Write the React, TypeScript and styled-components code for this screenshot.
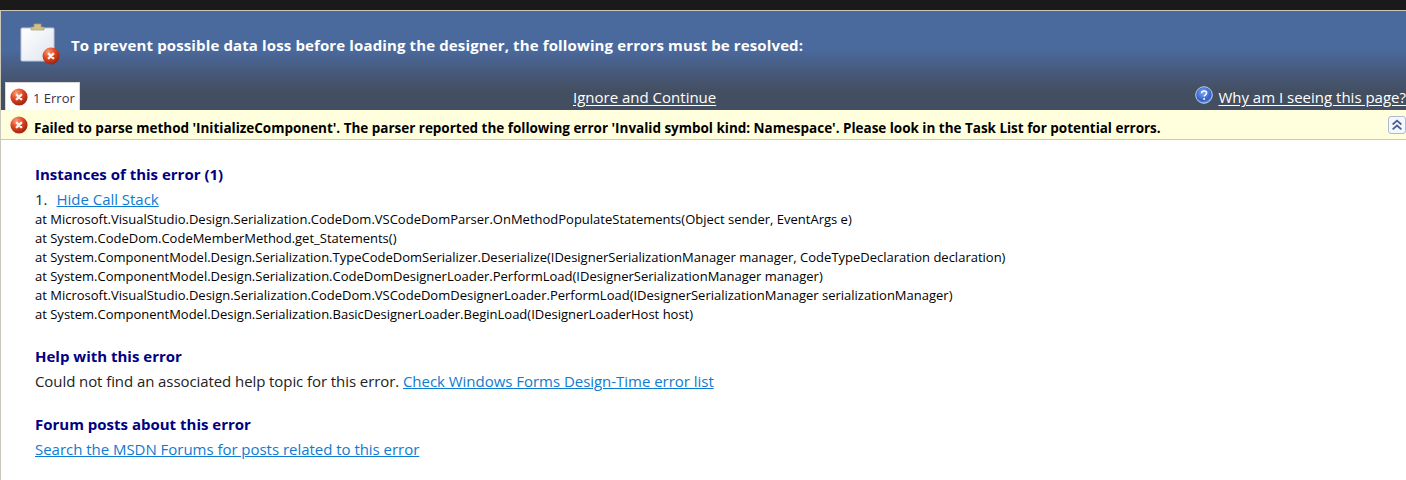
import styled, { createGlobalStyle } from "styled-components";

const stack = [
  "at Microsoft.VisualStudio.Design.Serialization.CodeDom.VSCodeDomParser.OnMethodPopulateStatements(Object sender, EventArgs e)",
  "at System.CodeDom.CodeMemberMethod.get_Statements()",
  "at System.ComponentModel.Design.Serialization.TypeCodeDomSerializer.Deserialize(IDesignerSerializationManager manager, CodeTypeDeclaration declaration)",
  "at System.ComponentModel.Design.Serialization.CodeDomDesignerLoader.PerformLoad(IDesignerSerializationManager manager)",
  "at Microsoft.VisualStudio.Design.Serialization.CodeDom.VSCodeDomDesignerLoader.PerformLoad(IDesignerSerializationManager serializationManager)",
  "at System.ComponentModel.Design.Serialization.BasicDesignerLoader.BeginLoad(IDesignerLoaderHost host)",
];

const GlobalStyle = createGlobalStyle`
  html, body {
    margin: 0;
    padding: 0;
    background: #fff;
    overflow: hidden;
  }
  body {
    font-family: "Open Sans", "Noto Sans", sans-serif;
  }
`;

const Page = styled.div`
  width: 1406px;
  height: 480px;
  display: flex;
  flex-direction: column;
  background: #fff;
  overflow: hidden;
`;

const TopBar = styled.div`
  flex: none;
  height: 10px;
  background: #1a1a1a;
`;

const Frame = styled.div`
  flex: 1;
  min-height: 0;
  display: flex;
  flex-direction: column;
  border-top: 1px solid #cfc8b8;
  border-left: 1px solid #cbc7bb;
`;

const Banner = styled.div`
  flex: none;
  height: 99px;
  display: flex;
  flex-direction: column;
  justify-content: space-between;
  background: linear-gradient(#4a6a9e 0%, #4a6a9e 38%, #47597a 62%, #434e60 82%, #434e60 100%);
`;

const Headline = styled.div`
  display: flex;
  align-items: center;
  gap: 9px;
  padding: 12px 0 0 19px;
`;

const HeadlineText = styled.h1`
  margin: 0;
  padding-top: 2px;
  color: #fff;
  font-size: 15px;
  line-height: 20px;
  font-weight: 700;
  letter-spacing: 0.13px;
  white-space: nowrap;
`;

const TabRow = styled.div`
  display: grid;
  grid-template-columns: 568px auto 1fr;
  align-items: end;
  padding-left: 4px;
`;

const Tab = styled.div`
  justify-self: start;
  width: 75px;
  height: 28px;
  display: flex;
  align-items: center;
  gap: 5px;
  padding-left: 4px;
  box-sizing: border-box;
  background: #fff;
  border: 1px solid #d8d8d8;
  border-bottom: 0;
  color: #3c2f4a;
  font-size: 13px;
`;

const TabLabel = styled.span`
  padding-top: 2px;
`;

const BannerLink = styled.a`
  color: #fff;
  font-size: 15px;
  line-height: 20px;
  text-decoration: underline;
  text-underline-offset: 2px;
  margin-bottom: 3px;
  white-space: nowrap;
`;

const HelpLink = styled.div`
  justify-self: end;
  display: flex;
  align-items: flex-start;
  gap: 5px;
`;

const Notice = styled.div`
  flex: none;
  height: 29px;
  display: flex;
  align-items: center;
  gap: 6px;
  padding: 0 0 0 9px;
  background: #ffffdd;
  border-bottom: 1px solid #cbc7bb;
`;

const NoticeText = styled.div`
  flex: 1;
  padding-top: 6px;
  color: #000;
  font-size: 13.5px;
  font-weight: 700;
  white-space: nowrap;
  letter-spacing: -0.02px;
`;

const Collapse = styled.div`
  width: 18px;
  height: 18px;
  box-sizing: border-box;
  border: 1px solid #a9bcd4;
  border-radius: 3px;
  background: #f4f7fb;
  display: flex;
  align-items: center;
  justify-content: center;
`;

const Content = styled.div`
  padding: 24px 0 0 34px;
  display: flex;
  flex-direction: column;
`;

const Section = styled.section`
  margin-bottom: 22px;
`;

const SectionTitle = styled.h2`
  margin: 0;
  color: #000080;
  font-size: 15px;
  line-height: 20px;
  font-weight: 700;
`;

const InstanceRow = styled.div`
  display: flex;
  gap: 9px;
  margin-top: 5px;
  color: #222;
  font-size: 15px;
  line-height: 20px;
`;

const BodyLink = styled.a`
  color: #0f7bd0;
  text-decoration: underline;
  font-size: 15px;
  letter-spacing: -0.03px;
`;

const StackList = styled.div`
  margin-top: 1px;
  color: #000;
  font-size: 13px;
  line-height: 19px;
  white-space: nowrap;
`;

const Line = styled.div`
  margin: 5px 0 1px;
  color: #222;
  font-size: 15px;
  line-height: 20px;
  letter-spacing: -0.08px;
`;

function ErrorIcon() {
  return (
    <svg width="18" height="18" viewBox="0 0 18 18" style={{ flexShrink: 0 }}>
      <defs>
        <radialGradient id="errorFill" cx="35%" cy="25%" r="80%">
          <stop offset="0%" stopColor="#fb9a70" />
          <stop offset="50%" stopColor="#dc4420" />
          <stop offset="100%" stopColor="#96230e" />
        </radialGradient>
      </defs>
      <circle cx="9" cy="9" r="8.6" fill="url(#errorFill)" />
      <path d="M6.800 6.800l4.400 4.400M11.200 6.800l-4.400 4.400" stroke="#ffeeea" strokeWidth="2.500" strokeLinecap="round" />
    </svg>
  );
}

function ClipboardIcon() {
  return (
    <svg width="42" height="42" viewBox="0 0 42 42" style={{ flexShrink: 0 }}>
      <defs>
        <linearGradient id="paper" x1="0" y1="0" x2="1" y2="1">
          <stop offset="0%" stopColor="#ffffff" />
          <stop offset="100%" stopColor="#dfe5ef" />
        </linearGradient>
        <radialGradient id="badge" cx="35%" cy="25%" r="80%">
          <stop offset="0%" stopColor="#fb9a70" />
          <stop offset="50%" stopColor="#dc4420" />
          <stop offset="100%" stopColor="#96230e" />
        </radialGradient>
      </defs>
      <rect x="1" y="5" width="33" height="33" rx="1" fill="url(#paper)" stroke="#bcc6d6" />
      <path d="M11 7V4h3V1h7v3h3v3z" fill="#cfc18a" stroke="#a99d6e" strokeWidth="0.7" />
      <circle cx="31" cy="33" r="8.500" fill="url(#badge)" />
      <path d="M28.800 30.800l4.400 4.400M33.200 30.800l-4.400 4.400" stroke="#ffeeea" strokeWidth="2.500" strokeLinecap="round" />
    </svg>
  );
}

function HelpIcon() {
  return (
    <svg width="18" height="18" viewBox="0 0 18 18" style={{ flexShrink: 0, marginTop: -1 }}>
      <defs>
        <radialGradient id="help" cx="45%" cy="35%" r="70%">
          <stop offset="0%" stopColor="#7ea6f0" />
          <stop offset="70%" stopColor="#2f5fc8" />
          <stop offset="100%" stopColor="#a9c0e8" />
        </radialGradient>
      </defs>
      <circle cx="9" cy="9" r="8.300" fill="url(#help)" stroke="#b9cbe6" />
      <path d="M6.500 7.200C6.600 5.600 7.700 5 9.100 5c1.500 0 2.500.8 2.500 2 0 1.100-.8 1.600-1.500 2.100-.6.4-.9.8-.9 1.500" fill="none" stroke="#fff" strokeWidth="1.500" />
      <circle cx="9.100" cy="13" r="1" fill="#fff" />
    </svg>
  );
}

function ChevronsUp() {
  return (
    <svg width="12" height="12" viewBox="0 0 11 11">
      <path d="M1.500 5L5.500 1.500 9.500 5M1.500 9.500L5.500 6 9.500 9.500" fill="none" stroke="#4a5f96" strokeWidth="1.700" />
    </svg>
  );
}

export default function App() {
  return (
    <Page>
      <GlobalStyle />
      <TopBar />
      <Frame>
        <Banner>
          <Headline>
            <ClipboardIcon />
            <HeadlineText>
              To prevent possible data loss before loading the designer, the following errors must be resolved:
            </HeadlineText>
          </Headline>
          <TabRow>
            <Tab>
              <ErrorIcon />
              <TabLabel>1 Error</TabLabel>
            </Tab>
            <BannerLink href="#">Ignore and Continue</BannerLink>
            <HelpLink>
              <HelpIcon />
              <BannerLink href="#">Why am I seeing this page?</BannerLink>
            </HelpLink>
          </TabRow>
        </Banner>
        <Notice>
          <ErrorIcon />
          <NoticeText>
            Failed to parse method 'InitializeComponent'. The parser reported the following error 'Invalid symbol kind: Namespace'. Please look in the Task List for potential errors.
          </NoticeText>
          <Collapse>
            <ChevronsUp />
          </Collapse>
        </Notice>
        <Content>
          <Section>
            <SectionTitle>Instances of this error (1)</SectionTitle>
            <InstanceRow>
              <span>1.</span>
              <BodyLink href="#">Hide Call Stack</BodyLink>
            </InstanceRow>
            <StackList>
              {stack.map((row) => (
                <div key={row}>{row}</div>
              ))}
            </StackList>
          </Section>
          <Section>
            <SectionTitle>Help with this error</SectionTitle>
            <Line>
              Could not find an associated help topic for this error.{" "}
              <BodyLink href="#">Check Windows Forms Design-Time error list</BodyLink>
            </Line>
          </Section>
          <Section>
            <SectionTitle>Forum posts about this error</SectionTitle>
            <Line>
              <BodyLink href="#">Search the MSDN Forums for posts related to this error</BodyLink>
            </Line>
          </Section>
        </Content>
      </Frame>
    </Page>
  );
}
